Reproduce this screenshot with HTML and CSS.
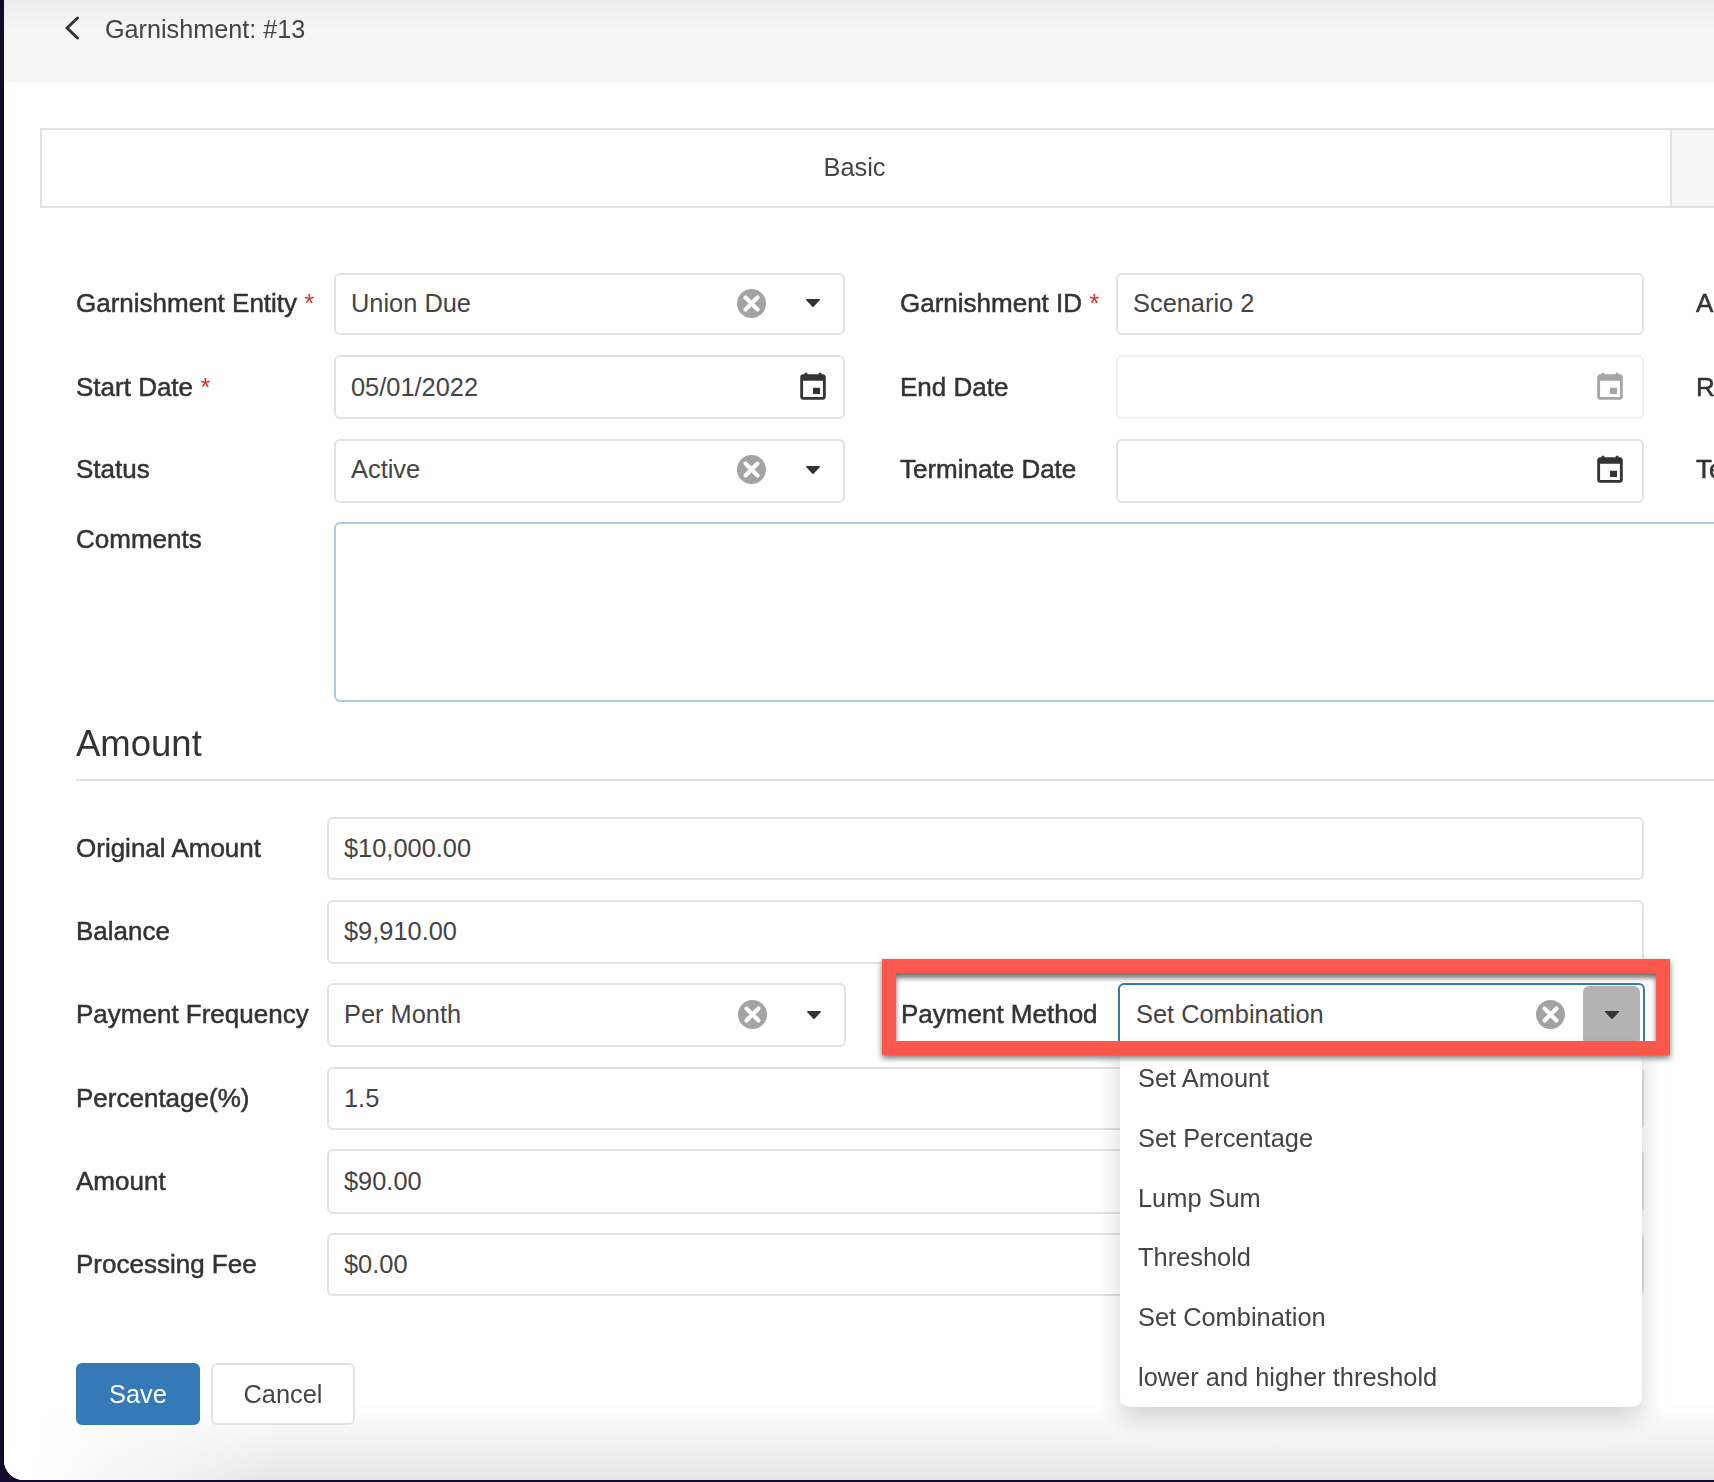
FILE: index.html
```html
<!DOCTYPE html>
<html lang="en">
<head>
    <meta charset="UTF-8">
    <title>Garnishment: #13</title>
    <link rel="stylesheet" href="styles.css">
</head>
<body>

    <svg class="icon-defs" width="0" height="0">
        <symbol id="icon-clear" viewBox="0 0 29 29">
            <circle cx="14.5" cy="14.5" r="14.5" fill="currentColor"/>
            <path d="M8.5 8.5l12 12M20.5 8.5l-12 12" stroke="#fff" stroke-width="4.2" stroke-linecap="round"/>
        </symbol>
        <symbol id="icon-caret" viewBox="0 0 14 8">
            <path d="M.8 0h12.4c.7 0 1 .8.5 1.3L7.6 7.7c-.3.3-.9.3-1.2 0L.3 1.3C-.2.8.1 0 .8 0z" fill="currentColor"/>
        </symbol>
        <symbol id="icon-calendar" viewBox="0 0 24 24">
            <path d="M17 12.5h-5v4.5h5v-4.5zM16 2v1H8V2H6v1H5c-1.11 0-2 .9-2 2v14c0 1.1.89 2 2 2h14c1.1 0 2-.9 2-2V5c0-1.1-.9-2-2-2h-1V2h-2zm3 17H5V7.5h14V19z" fill="currentColor"/>
        </symbol>
    </svg>

    <div class="window">
        <div class="page-header">
            <svg class="back-icon" width="16" height="24" viewBox="0 0 16 24">
                <path d="M13.5 2L3 12l10.5 10" fill="none" stroke="currentColor" stroke-width="3" stroke-linecap="round" stroke-linejoin="round"/>
            </svg>
            <span>Garnishment: #13</span>
        </div>

        <div class="tabs">
            <div class="tab active">Basic</div>
            <div class="tab"></div>
        </div>

        <div class="basic-form">
            <div class="row row-short">
                <div class="label">Garnishment Entity <span class="req">*</span></div>
                <div class="input wide select">
                    <span class="value">Union Due</span>
                    <svg class="clear"><use href="#icon-clear"/></svg>
                    <svg class="caret"><use href="#icon-caret"/></svg>
                </div>
                <div class="label second">Garnishment ID <span class="req">*</span></div>
                <div class="input wider"><span class="value">Scenario 2</span></div>
                <div class="label third">A</div>
            </div>
            <div class="row">
                <div class="label">Start Date <span class="req">*</span></div>
                <div class="input wide date">
                    <span class="value">05/01/2022</span>
                    <svg class="calendar"><use href="#icon-calendar"/></svg>
                </div>
                <div class="label second">End Date</div>
                <div class="input wider date disabled">
                    <span class="value"></span>
                    <svg class="calendar"><use href="#icon-calendar"/></svg>
                </div>
                <div class="label third">R</div>
            </div>
            <div class="row row-status">
                <div class="label">Status</div>
                <div class="input wide select">
                    <span class="value">Active</span>
                    <svg class="clear"><use href="#icon-clear"/></svg>
                    <svg class="caret"><use href="#icon-caret"/></svg>
                </div>
                <div class="label second">Terminate Date</div>
                <div class="input wider date">
                    <span class="value"></span>
                    <svg class="calendar"><use href="#icon-calendar"/></svg>
                </div>
                <div class="label third">Te</div>
            </div>
            <div class="row row-comments">
                <div class="label">Comments</div>
                <div class="textarea"></div>
            </div>
        </div>

        <div class="section-title">Amount</div>

        <div class="amount-form">
            <div class="row">
                <div class="label">Original Amount</div>
                <div class="input full"><span class="value">$10,000.00</span></div>
            </div>
            <div class="row">
                <div class="label">Balance</div>
                <div class="input full"><span class="value">$9,910.00</span></div>
            </div>
            <div class="row row-payment">
                <div class="label">Payment Frequency</div>
                <div class="input half select">
                    <span class="value">Per Month</span>
                    <svg class="clear"><use href="#icon-clear"/></svg>
                    <svg class="caret"><use href="#icon-caret"/></svg>
                </div>
                <div class="label second">Payment Method</div>
                <div class="input wider select open">
                    <span class="value">Set Combination</span>
                    <svg class="clear"><use href="#icon-clear"/></svg>
                    <div class="caret-btn"><svg class="caret"><use href="#icon-caret"/></svg></div>
                    <div class="dropdown">
                        <div class="option">Set Amount</div>
                        <div class="option">Set Percentage</div>
                        <div class="option">Lump Sum</div>
                        <div class="option">Threshold</div>
                        <div class="option">Set Combination</div>
                        <div class="option">lower and higher threshold</div>
                    </div>
                </div>
                <div class="highlight"></div>
            </div>
            <div class="row">
                <div class="label">Percentage(%)</div>
                <div class="input full"><span class="value">1.5</span></div>
            </div>
            <div class="row row-tall">
                <div class="label">Amount</div>
                <div class="input full"><span class="value">$90.00</span></div>
            </div>
            <div class="row">
                <div class="label">Processing Fee</div>
                <div class="input full"><span class="value">$0.00</span></div>
            </div>
        </div>

        <div class="form-footer">
            <div class="btn btn-primary">Save</div>
            <div class="btn">Cancel</div>
        </div>
    </div>

</body>
</html>
```

FILE: styles.css
```css
html, body {
    margin: 0;
    padding: 0;
}

body {
    width: 1714px;
    height: 1482px;
    overflow: hidden;
    background: #130a2c;
    font-family: "Liberation Sans", Arial, sans-serif;
    font-size: 25.4px;
    color: #444;
}

.icon-defs {
    position: absolute;
}

.window {
    margin-left: 4px;
    width: 1710px;
    height: 1480px;
    background: #fff;
    border-bottom-left-radius: 20px;
    overflow: hidden;
    display: flex;
    flex-direction: column;
    filter: blur(0.6px);
}

/* Header */
.page-header {
    height: 82px;
    flex: none;
    display: flex;
    align-items: flex-start;
    padding: 15px 0 0 60px;
    box-sizing: border-box;
    background: linear-gradient(180deg, #ececec 0, #f6f6f6 30px);
    font-size: 25.2px;
    color: #444;
}

.back-icon {
    color: #333;
    margin: 1px 25px 0 0;
}

/* Tabs */
.tabs {
    display: flex;
    flex: none;
    height: 80px;
    margin: 46px 0 0 36px;
}

.tab {
    flex: 1;
    box-sizing: border-box;
    border: 2px solid #e2e2e2;
    border-right: none;
    background: #f6f6f6;
    display: flex;
    align-items: center;
    justify-content: center;
}

.tab.active {
    flex: none;
    width: 1630px;
    background: #fff;
    padding: 0 3px 2px 0;
}

/* Form rows */
.basic-form {
    flex: none;
    padding-left: 72px;
    margin-top: 65px;
    display: flex;
    flex-direction: column;
    gap: 20px;
}

.amount-form {
    flex: none;
    padding-left: 72px;
    margin-top: 36px;
    display: flex;
    flex-direction: column;
    gap: 19.8px;
}

.row {
    display: flex;
    align-items: center;
    height: 64px;
    flex: none;
    position: relative;
}

.row-short {
    height: 62px;
}

/* text and icons sit slightly above the middle in these rows */
.row-short .label,
.row-short .value,
.row-short svg,
.row-payment .label,
.row-payment .value,
.row-payment .clear {
    margin-bottom: 2px;
}

.row-status .label,
.row-status .value,
.row-status svg {
    margin-bottom: 3px;
}

.amount-form .row {
    height: 63.4px;
}

.amount-form .row-tall {
    height: 65px;
    margin: -0.8px 0;
}

.row-comments {
    height: 180px;
    align-items: flex-start;
    margin-top: -1px;
}

.row-comments .label {
    padding-top: 2px;
    line-height: 30px;
}

.label {
    flex: none;
    width: 258px;
    font-size: 26px;
    color: #333;
    -webkit-text-stroke: 0.5px #333;
    white-space: nowrap;
}

.amount-form .label {
    width: 251px;
}

.amount-form .label.second,
.label.second {
    width: 216px;
    margin-left: 55px;
}

.label.third {
    width: auto;
    margin-left: 52px;
}

.req {
    color: #e02a2a;
    -webkit-text-stroke: 0;
}

/* Inputs */
.input {
    flex: none;
    height: 100%;
    box-sizing: border-box;
    border: 2px solid #e2e2e2;
    border-radius: 6px;
    background: #fff;
    display: flex;
    align-items: center;
    padding-left: 15px;
    position: relative;
}

.wide {
    width: 511px;
}

.wider {
    width: 528px;
}

.half {
    width: 519px;
}

.full {
    width: 1317px;
}

.value {
    flex: 1;
    white-space: nowrap;
}

.date {
    padding-right: 13px;
}

.wider.date {
    padding-right: 15px;
}

.disabled {
    border-color: #f0f0f0;
    color: #a5a5a5;
}

.calendar {
    width: 34px;
    height: 34px;
    color: #333;
}

.disabled .calendar {
    color: #a5a5a5;
}

.clear {
    width: 29px;
    height: 29px;
    flex: none;
    color: #a3a3a3;
}

.caret {
    width: 14px;
    height: 8px;
    flex: none;
    color: #333;
}

.select {
    padding-right: 23px;
}

.select .clear {
    margin-right: 40px;
}

.textarea {
    box-sizing: border-box;
    flex: none;
    width: 1400px;
    height: 100%;
    border: 2px solid #a9cbe6;
    border-radius: 6px;
}

.section-title {
    flex: none;
    margin: 21px 0 0 72px;
    height: 56px;
    line-height: 42px;
    font-size: 36.5px;
    color: #333;
    border-bottom: 2px solid #e2e2e2;
}

/* Open select */
.input.open {
    width: 527px;
    margin-left: 1px;
    border-color: #337ab7;
    padding-left: 16px;
    padding-right: 3px;
}

.input.open .clear {
    margin-right: 18px;
}

.caret-btn {
    width: 57px;
    height: 59px;
    flex: none;
    background: #b3b3b3;
    border-radius: 6px;
    display: flex;
    align-items: center;
    justify-content: center;
}

.dropdown {
    position: absolute;
    z-index: 3;
    top: 61px;
    left: 0;
    width: 522px;
    height: 361px;
    box-sizing: border-box;
    padding-top: 17px;
    background: #fff;
    border-radius: 0 0 10px 10px;
    box-shadow: 0 10px 24px rgba(0, 0, 0, 0.18);
}

.option {
    height: 59.7px;
    line-height: 30px;
    padding-left: 18px;
}

/* Red annotation box over the payment method field */
.highlight {
    position: absolute;
    z-index: 4;
    left: 806px;
    top: -24.4px;
    width: 788px;
    height: 96px;
    box-sizing: border-box;
    border: 14px solid #fb584b;
    box-shadow: 0 3px 6px rgba(0, 0, 0, 0.55), inset 0 5px 5px rgba(0, 0, 0, 0.55);
}

/* Footer */
.form-footer {
    flex: 1;
    display: flex;
    align-items: flex-start;
    gap: 11px;
    padding: 67px 0 0 72px;
    background:
        linear-gradient(90deg, #fff 30px, rgba(255, 255, 255, 0) 280px),
        linear-gradient(180deg, #fff 58%, #e6e6e6 100%);
}

.btn {
    box-sizing: border-box;
    width: 144px;
    height: 62px;
    border: 2px solid #e2e2e2;
    border-radius: 6px;
    background: #fff;
    display: flex;
    align-items: center;
    justify-content: center;
}

.btn-primary {
    width: 124px;
    border-color: #337ab7;
    background: #337ab7;
    color: #fff;
}
```
